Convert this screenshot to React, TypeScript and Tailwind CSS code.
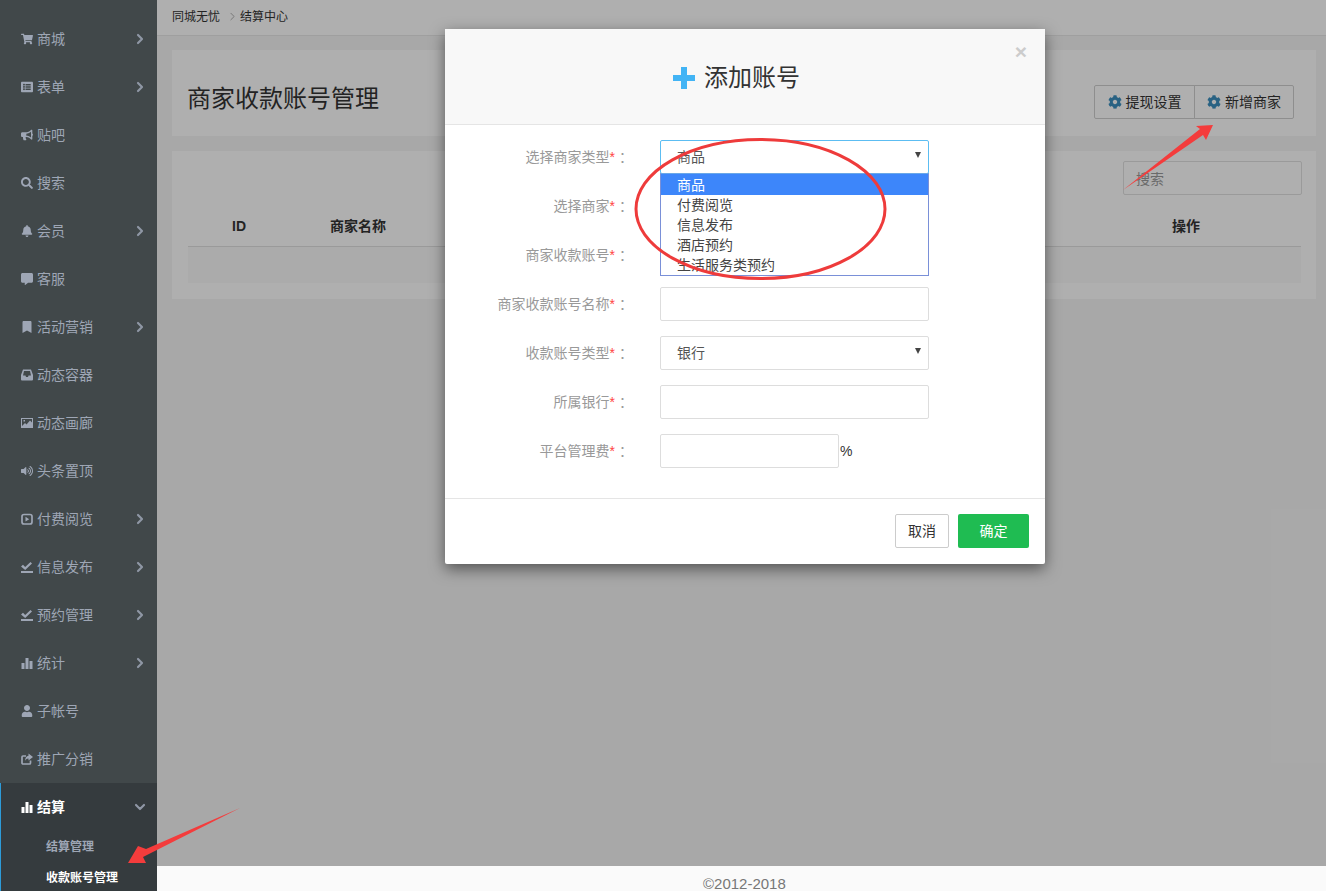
import type { ReactNode } from 'react';
import { ChevronDown, ChevronRight } from 'lucide-react';
import {
  FaBell,
  FaBookmark,
  FaBullhorn,
  FaCog,
  FaCommentAlt,
  FaListAlt,
  FaSearch,
  FaShoppingCart,
  FaUser,
  FaVolumeUp,
} from 'react-icons/fa';

function StatsIcon() {
  return (
    <svg viewBox="0 0 12 12" className="h-3 w-3" fill="currentColor">
      <rect x="0.5" y="6" width="3" height="6" />
      <rect x="4.5" y="1" width="3" height="11" />
      <rect x="8.5" y="4" width="3" height="8" />
    </svg>
  );
}

function SavedIcon() {
  return (
    <svg viewBox="0 0 12 12" className="h-3 w-3" fill="currentColor">
      <path d="M0 5.5 2 3.8 4.2 6 9.5 1 11 2.6 4.2 9z" />
      <rect x="0" y="10" width="12" height="2" />
    </svg>
  );
}

function InboxIcon() {
  return (
    <svg viewBox="0 0 12 12" className="h-3 w-3" fill="currentColor">
      <path d="M2 0.5h8L12 6v4.5a1 1 0 0 1-1 1H1a1 1 0 0 1-1-1V6zM3 2 2 6.5h2.5l0.5 1.5h2l0.5-1.5H10L9 2z" fillRule="evenodd" />
    </svg>
  );
}

function PictureIcon() {
  return (
    <svg viewBox="0 0 12 12" className="h-3 w-3" fill="currentColor">
      <path d="M0 1h12v10H0zM1 2v7l3-3 1.5 1.5L9 3.5l2 2V2zM2.5 3h1.5v1.5H2.5z" fillRule="evenodd" />
    </svg>
  );
}

function ExpandIcon() {
  return (
    <svg viewBox="0 0 12 12" className="h-3 w-3">
      <rect x="1" y="1.5" width="10" height="9.5" rx="2" fill="none" stroke="currentColor" strokeWidth="1.7" />
      <path d="M4.5 3.8 8.2 6.2 4.5 8.6z" fill="currentColor" />
    </svg>
  );
}

function ShareIcon() {
  return (
    <svg viewBox="0 0 12 12" className="h-3 w-3">
      <path d="M9.5 7.5V10a1 1 0 0 1-1 1H2a1 1 0 0 1-1-1V4a1 1 0 0 1 1-1h3" fill="none" stroke="currentColor" strokeWidth="1.7" />
      <path d="M7.5 0.5 12 4 7.5 7.5V5.5C5.5 5.5 4.5 6.500 4 8c0-3 1.500-5 3.500-5.200z" fill="currentColor" />
    </svg>
  );
}

const i = 'h-3 w-3';

const menu: { label: string; icon: ReactNode; more?: boolean }[] = [
  { label: '商城', icon: <FaShoppingCart className={i} />, more: true },
  { label: '表单', icon: <FaListAlt className={i} />, more: true },
  { label: '贴吧', icon: <FaBullhorn className={i} /> },
  { label: '搜索', icon: <FaSearch className={i} /> },
  { label: '会员', icon: <FaBell className={i} />, more: true },
  { label: '客服', icon: <FaCommentAlt className={i} /> },
  { label: '活动营销', icon: <FaBookmark className={i} />, more: true },
  { label: '动态容器', icon: <InboxIcon /> },
  { label: '动态画廊', icon: <PictureIcon /> },
  { label: '头条置顶', icon: <FaVolumeUp className={i} /> },
  { label: '付费阅览', icon: <ExpandIcon />, more: true },
  { label: '信息发布', icon: <SavedIcon />, more: true },
  { label: '预约管理', icon: <SavedIcon />, more: true },
  { label: '统计', icon: <StatsIcon />, more: true },
  { label: '子帐号', icon: <FaUser className={i} /> },
  { label: '推广分销', icon: <ShareIcon /> },
];

const typeOptions = ['商品', '付费阅览', '信息发布', '酒店预约', '生活服务类预约'];

function Sidebar() {
  return (
    <aside className="h-[891px] w-[157px] shrink-0 overflow-hidden bg-[#41484a] pt-[15px] text-sm text-[#9ea6b5]">
      {menu.map((m) => (
        <div key={m.label} className="flex h-12 items-center pl-[21px] pr-[9px]">
          <span className="flex w-4 shrink-0">{m.icon}</span>
          <span className="flex-1 leading-5">{m.label}</span>
          {m.more && <ChevronRight size={16} strokeWidth={3.2} className="text-[#8f97a5]" />}
        </div>
      ))}
      <div className="h-[108px] border-l border-[#2d9bd8] bg-[#353b3e]">
        <div className="flex h-12 items-center pl-5 pr-[9px] text-white">
          <span className="flex w-4 shrink-0">
            <StatsIcon />
          </span>
          <span className="flex-1 font-bold leading-5">结算</span>
          <ChevronDown size={16} strokeWidth={3.2} className="text-[#8f97a5]" />
        </div>
        <div className="flex h-[31px] items-center pl-[45px] text-xs font-bold">结算管理</div>
        <div className="flex h-[31px] items-center pl-[45px] text-xs font-bold text-white">收款账号管理</div>
      </div>
    </aside>
  );
}

function PageBehind() {
  return (
    <div className="h-full bg-[#f1f1f1]">
      <div className="flex h-9 items-center border-b border-[#e4e4e4] bg-[#fbfbfb] px-[15px] pb-[2px] text-xs text-[#333]">
        <span>同城无忧</span>
        <ChevronRight size={13} strokeWidth={1.5} className="ml-[6px] mr-px text-[#999]" />
        <span>结算中心</span>
      </div>
      <div className="ml-[15px] mr-[10px] mt-[14px] flex h-[86px] items-center justify-between bg-[#fbfbfb] pl-[15px] pr-[22px]">
        <h1 className="pt-[11px] text-2xl font-normal text-[#333]">商家收款账号管理</h1>
        <div className="flex pt-[18px] text-sm text-[#333]">
          <button className="flex h-[34px] w-[101px] items-center justify-center gap-1 rounded-l-[2px] border border-[#ccc]">
            <FaCog className="h-[14px] w-[14px] text-[#3c8dbc]" />
            提现设置
          </button>
          <button className="-ml-px flex h-[34px] w-[100px] items-center justify-center gap-1 rounded-r-[2px] border border-[#ccc]">
            <FaCog className="h-[14px] w-[14px] text-[#3c8dbc]" />
            新增商家
          </button>
        </div>
      </div>
      <div className="ml-[15px] mr-[10px] mt-[15px] h-[148px] bg-[#fbfbfb] pl-4 pr-[15px] pt-[10px]">
        <div className="flex justify-end">
          <input
            placeholder="搜索"
            className="-mr-px h-[34px] w-[179px] rounded-[2px] border border-[#ddd] px-3 pt-px text-sm placeholder:text-[#999]"
          />
        </div>
        <div className="mt-[15px] flex h-[37px] items-center border-b border-[#ddd] pb-[5px] text-sm font-bold text-[#333]">
          <span className="w-[102px] text-center">ID</span>
          <span className="ml-[10px] w-[116px] text-center">商家名称</span>
          <span className="ml-auto mr-[101px]">操作</span>
        </div>
        <div className="h-[36px] bg-[#f5f5f5]" />
      </div>
    </div>
  );
}

function Field({ label, children }: { label: string; children: ReactNode }) {
  return (
    <div className="flex h-[34px] items-center">
      <label className="w-[184px] shrink-0 text-right text-sm text-[#999]">
        {label}
        <span className="text-[#f44]">*</span>
        <span className="inline-block w-[14px] pl-1 text-left">：</span>
      </label>
      <div className="ml-[31px] flex items-center">{children}</div>
    </div>
  );
}

function SelectBox({ value, focus }: { value: string; focus?: boolean }) {
  return (
    <div
      className={`flex h-[34px] w-[269px] items-center justify-between rounded-[2px] border pl-4 pr-[7px] text-sm text-[#555] ${
        focus ? 'border-[#5cbdf2]' : 'border-[#ddd]'
      }`}
    >
      <span>{value}</span>
      <span className="mb-1 h-0 w-0 border-x-[3px] border-t-[6px] border-x-transparent border-t-[#444]" />
    </div>
  );
}

function TextBox({ className }: { className: string }) {
  return <input className={`h-[34px] rounded-[2px] border border-[#ddd] ${className}`} />;
}

function Modal() {
  return (
    <div className="absolute left-[445px] top-[29px] z-20 h-[535px] w-[600px] rounded-[2px] bg-white shadow-[0_5px_15px_rgba(0,0,0,0.5)]">
      <div className="relative flex h-[96px] items-center justify-center gap-[9px] border-b border-[#e5e5e5] bg-[#f8f8f8] pr-[17px] pt-[2px]">
        <svg viewBox="0 0 22 22" className="h-[22px] w-[22px]" fill="#42b4f5">
          <path d="M8 0h6v8h8v6h-8v8H8v-8H0V8h8z" />
        </svg>
        <h2 className="text-2xl font-normal text-[#333]">添加账号</h2>
        <span className="absolute right-[18px] top-[9px] text-[21px] font-bold leading-7 text-[#ccc]">×</span>
      </div>
      <div className="relative flex flex-col gap-[15px] pt-[15px]">
        <Field label="选择商家类型">
          <SelectBox value="商品" focus />
        </Field>
        <Field label="选择商家">
          <TextBox className="w-[269px]" />
        </Field>
        <Field label="商家收款账号">
          <TextBox className="w-[269px]" />
        </Field>
        <Field label="商家收款账号名称">
          <TextBox className="w-[269px]" />
        </Field>
        <Field label="收款账号类型">
          <SelectBox value="银行" />
        </Field>
        <Field label="所属银行">
          <TextBox className="w-[269px]" />
        </Field>
        <Field label="平台管理费">
          <TextBox className="w-[179px]" />
          <span className="ml-px text-sm text-[#333]">%</span>
        </Field>

        {/* open native select list */}
        <ul className="absolute left-[215px] top-[48px] h-[103px] w-[269px] border border-[#7a90d8] border-t-[#6aa8e8] bg-white text-sm text-[#444]">
          {typeOptions.map((o, idx) => (
            <li
              key={o}
              className={`flex h-5 items-center pl-4 ${idx === 0 ? 'h-[21px] bg-[#3d86fa] text-white' : ''}`}
            >
              {o}
            </li>
          ))}
        </ul>
      </div>
      <div className="mt-[30px] flex justify-end gap-[9px] border-t border-[#e5e5e5] pr-4 pt-[15px] text-sm">
        <button className="h-[34px] w-[54px] rounded-[2px] border border-[#ccc] text-[#333]">取消</button>
        <button className="h-[34px] w-[71px] rounded-[2px] bg-[#1fbc52] text-white">确定</button>
      </div>
    </div>
  );
}

export default function App() {
  return (
    <div className="relative flex h-[891px] w-[1326px] overflow-hidden bg-white font-['Liberation_Sans','Noto_Sans_CJK_SC',sans-serif]">
      <Sidebar />
      <main className="flex min-w-0 flex-1 flex-col">
        <div className="relative h-[866px] shrink-0">
          <PageBehind />
          <div className="absolute inset-0 bg-black/30" />
        </div>
        <footer className="h-[25px] bg-[#fafafa] pl-[546px] pt-[8px] text-[15px] leading-5 text-[#777]">©2012-2018</footer>
      </main>
      <Modal />

      {/* hand drawn marks on top of the screenshot */}
      <svg className="pointer-events-none absolute left-0 top-0 z-30" width="1326" height="891" fill="#f43c3c">
        <ellipse cx="760.5" cy="209" rx="124.5" ry="69.5" fill="none" stroke="#ee3b3b" strokeWidth="3" />
        <polygon points="1123,190 1200,129 1196,126 1213,125 1206,140 1203,135" />
        <polygon points="240,808 146,849 138,846 128,863 146,863 143,857" />
      </svg>
    </div>
  );
}
